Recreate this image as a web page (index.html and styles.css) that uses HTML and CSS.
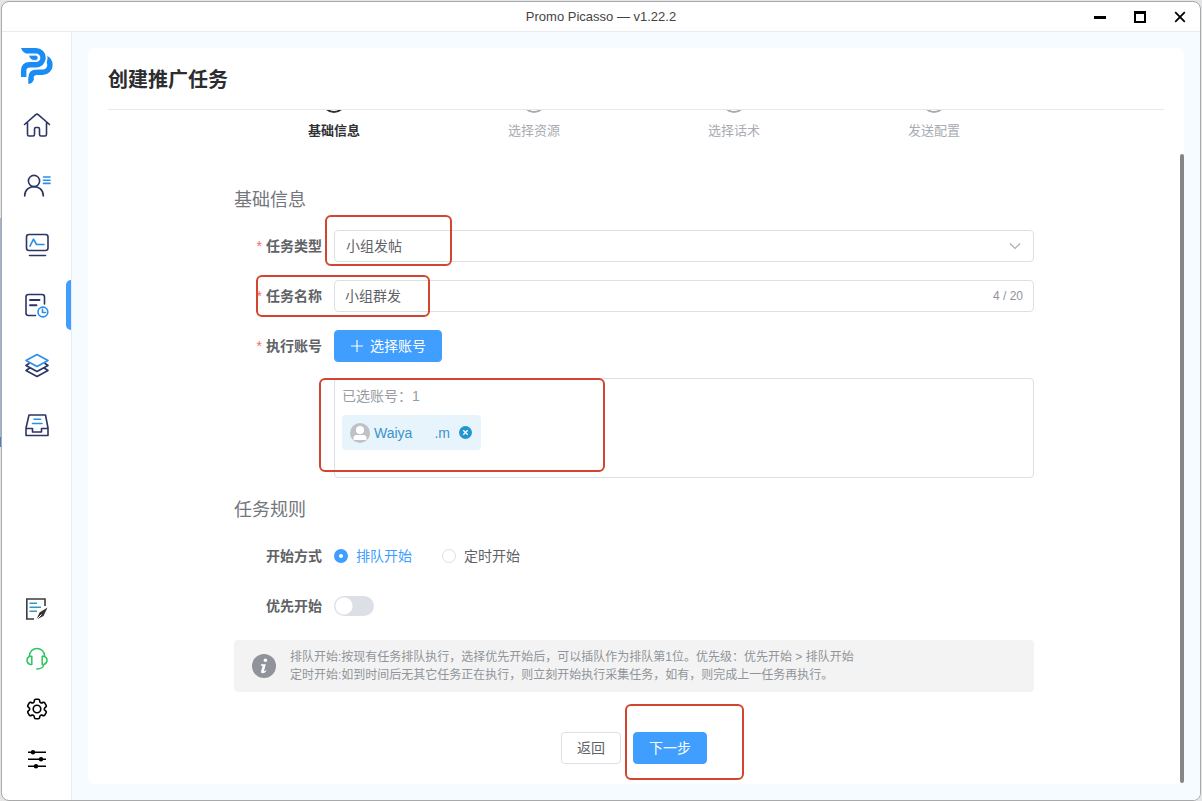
FILE: index.html
```html
<!DOCTYPE html>
<html lang="zh-CN">
<head>
<meta charset="utf-8">
<meta name="viewport" content="width=device-width, initial-scale=1">
<title>Promo Picasso — v1.22.2</title>
<link rel="stylesheet" href="styles.css">
</head>
<body>
<div class="window">
  <header class="titlebar">
    <span class="titlebar-text">Promo Picasso — v1.22.2</span>
    <div class="window-controls">
      <button type="button" aria-label="最小化"><svg width="16" height="16" viewBox="0 0 16 16"><path d="M2 8.500H14" stroke="#000" stroke-width="3"/></svg></button>
      <button type="button" aria-label="最大化"><svg width="16" height="16" viewBox="0 0 16 16"><path d="M3 3.500V13H13V3.500" fill="none" stroke="#000" stroke-width="2"/><path d="M2 3.500H14" stroke="#000" stroke-width="3"/></svg></button>
      <button type="button" aria-label="关闭"><svg width="16" height="16" viewBox="0 0 16 16"><path d="M3.200 3.200L12.800 12.800M12.800 3.200L3.200 12.800" stroke="#000" stroke-width="1.800"/></svg></button>
    </div>
  </header>
  <div class="body">
    <nav class="sidebar">
      <div class="logo">
        <svg width="34" height="38" viewBox="20 47 34 38" fill="none" stroke="#1a8cf5" stroke-width="5.400">
          <path d="M45.500 57.800q4.500 2.400 4.500 7a7.400 7.400 0 0 1-7.400 7.500H37q-6 0-6 5.500V80"/>
          <path d="M28.300 79h5.400q-.5 4.500-5.400 5z" fill="#1a8cf5" stroke="none"/>
          <path d="M26 50.700H36a7 7 0 0 1 0 14.100H30q-6.300 0-6.300 6V77" stroke="#fff" stroke-width="9"/>
          <path d="M26 50.700H36a7 7 0 0 1 0 14.100H30q-6.300 0-6.300 6V77"/>
          <path d="M21 48h6v5.400q-4.500-.4-6-5.400z" fill="#1a8cf5" stroke="none"/>
          <path d="M28.500 55.200H35.500a2.600 2.600 0 0 1 0 5.200H33q-3.500-.8-4.500-5.200z" fill="#1a8cf5" stroke="#fff" stroke-width=".8"/>
        </svg>
      </div>
      <div class="nav-main">
        <button type="button" aria-label="首页"><svg class="icon" viewBox="0 0 32 32"><path d="M3.500 15.500L14.800 5.600q1.200-1 2.400 0L28.500 15.500M6.500 14v11.500q0 1.500 1.500 1.500h4q1.500 0 1.500-1.500V20q0-1.500 1.500-1.500h2q1.500 0 1.500 1.500v5.500q0 1.500 1.500 1.500h4q1.500 0 1.500-1.500V14"/></svg></button>
        <button type="button" aria-label="账号"><svg class="icon" viewBox="0 0 32 32"><circle cx="13" cy="12" r="5.600"/><path d="M3.700 27c0-12.500 18.600-12.500 18.600 0"/><path class="accent" d="M22.500 8h6.500M22.500 11.200h6.500M22.500 14.400h6.500"/></svg></button>
        <button type="button" aria-label="监控"><svg class="icon" viewBox="0 0 32 32"><rect x="5.500" y="5.500" width="21.500" height="16" rx="2.500"/><path d="M8.500 26.500h16"/><path class="accent" d="M9 17.200l3.500-7 3 5.300H23"/></svg></button>
        <button type="button" class="active" aria-label="任务"><svg class="icon" viewBox="0 0 32 32"><path d="M14.500 26.500H7.500q-2.500 0-2.500-2.500V8q0-2.500 2.500-2.500h13.500q2.500 0 2.500 2.500v7"/><path d="M9 11h9.500M9 16.300h6.500" stroke-width="1.900"/><g class="accent"><circle cx="21.900" cy="23" r="4.900"/><path d="M21.500 20.300v3.200h3"/></g></svg></button>
        <button type="button" aria-label="素材"><svg class="icon" viewBox="0 0 32 32"><path d="M8 14.500L5 16.500l11 6 11-6-3-2M8 19.500L5 21.500l11 6 11-6-3-2"/><path class="accent" fill="#fff" d="M16 5.500l11 6-11 6-11-6z"/></svg></button>
        <button type="button" aria-label="收件箱"><svg class="icon" viewBox="0 0 32 32"><path d="M8 6h16.500l2.500 13v7.500H5V19zM5 19.500h6.500V23h9v-3.500H27"/><path class="accent" d="M13 10.200h6.500M11.500 14.500H21"/></svg></button>
      </div>
      <div class="nav-extra">
        <button type="button" aria-label="记录"><svg class="icon note" viewBox="0 0 32 32"><path d="M24 13V6H5.800v20H13"/><path d="M8.500 10.200H16M8.500 14.200H20M8.500 18.200H16" stroke="#3b93c5"/><path d="M15.500 26.500l3-7 8-5-4 8.500z" fill="#333" stroke="none"/><path d="M15.500 26.500l5-5" stroke="#fff" stroke-width="1"/></svg></button>
        <button type="button" aria-label="客服"><svg class="icon support" viewBox="0 0 32 32"><path d="M8.200 13.500C8.700 2.800 23.300 2.800 23.800 13.500M10.800 13.200H9q-3 .8-3 4t3 4.200h1.800zM21.200 13.200H23q3 .8 3 4t-3 4.200h-1.800zM22.800 21.500q-.6 4.500-7 4.500"/></svg></button>
        <button type="button" aria-label="设置"><svg class="icon gear" viewBox="0 0 24 24"><path d="M9.594 3.940c.09-.542.560-.940 1.110-.940h2.593c.550 0 1.020.398 1.110.940l.213 1.281c.063.374.313.686.645.870.074.040.147.083.220.127.325.196.720.257 1.075.124l1.217-.456a1.125 1.125 0 0 1 1.370.490l1.296 2.247a1.125 1.125 0 0 1-.260 1.431l-1.003.827c-.293.241-.438.613-.430.992a7.723 7.723 0 0 1 0 .255c-.008.378.137.750.430.991l1.004.827c.424.350.534.955.260 1.430l-1.298 2.247a1.125 1.125 0 0 1-1.369.491l-1.217-.456c-.355-.133-.750-.072-1.076.124a6.470 6.470 0 0 1-.220.128c-.331.183-.581.495-.644.869l-.213 1.281c-.090.543-.560.940-1.110.940h-2.594c-.550 0-1.019-.398-1.110-.940l-.213-1.281c-.062-.374-.312-.686-.644-.870a6.520 6.520 0 0 1-.220-.127c-.325-.196-.720-.257-1.076-.124l-1.217.456a1.125 1.125 0 0 1-1.369-.490l-1.297-2.247a1.125 1.125 0 0 1 .260-1.431l1.004-.827c.292-.240.437-.613.430-.991a6.932 6.932 0 0 1 0-.255c.007-.380-.138-.751-.430-.992l-1.004-.827a1.125 1.125 0 0 1-.260-1.430l1.297-2.247a1.125 1.125 0 0 1 1.370-.491l1.216.456c.356.133.751.072 1.076-.124.072-.044.146-.086.220-.128.332-.183.582-.495.644-.869z"/><circle cx="12" cy="12" r="3.500"/></svg></button>
        <button type="button" aria-label="偏好"><svg class="icon sliders" viewBox="0 0 32 32"><path d="M7 9.200h18M7 16.200h18M7 23.200h18"/><g fill="#000" stroke="none"><circle cx="12" cy="9.200" r="2.200"/><circle cx="20" cy="16.200" r="2.200"/><circle cx="15" cy="23.200" r="2.200"/></g></svg></button>
      </div>
    </nav>
    <main class="content">
      <section class="card">
        <h1>创建推广任务</h1>
        <div class="scroller">
          <ol class="steps">
            <li class="current"><span class="dot"></span>基础信息</li>
            <li><span class="dot"></span>选择资源</li>
            <li><span class="dot"></span>选择话术</li>
            <li><span class="dot"></span>发送配置</li>
          </ol>
          <form class="form">
            <h2>基础信息</h2>
            <div class="row">
              <label class="label required" for="type">任务类型</label>
              <div class="field">
                <select id="type" class="control"><option>小组发帖</option></select>
                <svg class="chevron" width="12" height="12" viewBox="0 0 12 12"><path d="M1 3.500l5 5 5-5" fill="none" stroke="#a8abb2" stroke-width="1.200"/></svg>
                <span class="mark mark-type"></span>
              </div>
            </div>
            <div class="row">
              <label class="label required" for="name">任务名称</label>
              <div class="field">
                <input id="name" class="control" type="text" value="小组群发" maxlength="20">
                <span class="count">4 / 20</span>
                <span class="mark mark-name"></span>
              </div>
            </div>
            <div class="row">
              <span class="label required">执行账号</span>
              <div class="field">
                <button type="button" class="btn primary"><svg width="14" height="14" viewBox="0 0 14 14"><path d="M7 1v12M1 7h12" stroke="#fff" stroke-width="1.100"/></svg>选择账号</button>
                <div class="accounts">
                  <p>已选账号：1</p>
                  <div class="tag">
                    <svg width="20" height="20" viewBox="0 0 20 20"><circle cx="10" cy="10" r="10" fill="#bfc1c6"/><circle cx="10" cy="7" r="4" fill="#fff"/><path d="M3.500 17v-2q0-3 3-3h7q3 0 3 3v2z" fill="#fff"/></svg>
                    <span class="tag-name"><span>Waiya</span><span>.m</span></span>
                    <button type="button" class="tag-close" aria-label="移除"><svg width="13" height="13" viewBox="0 0 13 13"><circle cx="6.500" cy="6.500" r="6.500" fill="#2196cf"/><path d="M4.300 4.300l4.400 4.400M8.700 4.300L4.300 8.700" stroke="#fff" stroke-width="1.300"/></svg></button>
                  </div>
                  <span class="mark mark-accounts"></span>
                </div>
              </div>
            </div>
            <h2>任务规则</h2>
            <div class="row">
              <span class="label">开始方式</span>
              <div class="field radios">
                <label><input type="radio" name="start" checked><span>排队开始</span></label>
                <label><input type="radio" name="start"><span>定时开始</span></label>
              </div>
            </div>
            <div class="row">
              <label class="label" for="priority">优先开始</label>
              <div class="field radios"><input id="priority" class="switch" type="checkbox" role="switch"></div>
            </div>
            <div class="notice">
              <svg width="24" height="24" viewBox="0 0 24 24"><circle cx="12" cy="12" r="12" fill="#909399"/><circle cx="13.400" cy="6.300" r="1.700" fill="#fff"/><path d="M9 10.300h4.800l-1.900 7q.8.300 2-1l.6.500q-1.700 2.500-3.700 2.500-2.200 0-1.600-2.200l1.400-5-1.800-.6z" fill="#fff"/></svg>
              <p>排队开始:按现有任务排队执行，选择优先开始后，可以插队作为排队第1位。优先级：优先开始 &gt; 排队开始<br>定时开始:如到时间后无其它任务正在执行，则立刻开始执行采集任务，如有，则完成上一任务再执行。</p>
            </div>
            <div class="actions">
              <button type="button" class="btn">返回</button>
              <div class="next"><button type="button" class="btn primary">下一步</button><span class="mark mark-next"></span></div>
            </div>
          </form>
        </div>
        <span class="scrollbar"></span>
      </section>
    </main>
  </div>
</div>
</body>
</html>
```
FILE: styles.css
```css
* { box-sizing: border-box; }
body {
  margin: 0;
  padding: 1px 1px 0;
  height: 100vh;
  overflow: hidden;
  background: linear-gradient(#e4e5e7 218px, #9fb4d0 218px, #9fb4d0 437px, #4a7fd0 437px, #4a7fd0 447px, #e4e5e7 447px) left / 2px 100% no-repeat #e4e5e7;
  font: 14px/20px "Liberation Sans", "Noto Sans CJK SC", sans-serif;
  color: #606266;
}
h1, h2, p, ol { margin: 0; padding: 0; }
button { font: inherit; color: inherit; background: none; border: 0; padding: 0; }
svg { display: block; flex: none; }

.window {
  display: flex;
  flex-direction: column;
  height: 100%;
  border: 1px solid #a9a9a9;
  border-radius: 8px;
  background: #fff;
  overflow: hidden;
}
.titlebar {
  position: relative;
  display: flex;
  align-items: center;
  justify-content: center;
  height: 30px;
  flex: none;
  border-bottom: 1px solid #e9ebee;
  font-size: 13px;
  color: #444;
}
.window-controls { position: absolute; right: 0; top: 0; display: flex; }
.window-controls button { display: grid; place-items: center; width: 40px; height: 30px; }

.body { flex: 1; display: flex; min-height: 0; }
.sidebar {
  display: flex;
  flex-direction: column;
  width: 70px;
  flex: none;
  padding: 15px 0 16px 1px;
  border-right: 1px solid #e8edf2;
}
.logo { display: flex; justify-content: center; height: 48px; }
.nav-main, .nav-extra { display: flex; flex-direction: column; }
.nav-main button, .nav-extra button { position: relative; display: grid; place-items: center; height: 60px; }
.nav-extra { margin-top: auto; }
.nav-extra button { height: 50px; }
.active::after {
  content: "";
  position: absolute;
  right: 0;
  top: 5px;
  width: 5px;
  height: 50px;
  border-radius: 5px 0 0 5px;
  background: #409eff;
}
.icon { width: 32px; height: 32px; fill: none; stroke: #2c3566; stroke-width: 1.6; stroke-linejoin: round; stroke-linecap: round; }
.accent { stroke: #2b8eea; }
.note { stroke: #3c3c3c; stroke-linecap: butt; stroke-linejoin: miter; }
.support { stroke: #2fc45f; stroke-width: 1.5; }
.gear { width: 26px; height: 26px; stroke: #000; stroke-width: 1.5; }
.sliders { stroke: #000; stroke-linecap: butt; }

.content { flex: 1; display: flex; min-width: 0; padding: 16px; background: #f6fbff; }
.card {
  position: relative;
  flex: 1;
  display: flex;
  flex-direction: column;
  min-width: 0;
  background: #fff;
  border-radius: 6px;
}
h1 {
  margin: 0 20px;
  padding: 17px 0 14px;
  border-bottom: 1px solid #e8e9eb;
  font-size: 20px;
  line-height: 30px;
  color: #2c2d30;
}
.scroller { flex: 1; min-height: 0; overflow: hidden; padding: 0 24px 0 20px; }
.scrollbar { position: absolute; right: 0; top: 106px; bottom: 1px; width: 4px; border-radius: 2px; background: #868686; }

.steps {
  display: flex;
  max-width: 800px;
  margin: -21px auto 45px;
  list-style: none;
  font-size: 13px;
  color: #a8abb2;
}
.steps li { flex: 1; display: flex; flex-direction: column; align-items: center; gap: 8px; }
.steps .current { color: #303133; font-weight: bold; }
.dot { width: 24px; height: 24px; border: 2px solid; border-radius: 50%; }

.form { display: flex; flex-direction: column; gap: 18px; max-width: 800px; margin: 0 auto; }
h2 { padding-top: 2px; font-size: 18px; line-height: 24px; font-weight: normal; color: #73767c; }
.row { display: flex; }
.label { width: 100px; flex: none; padding-right: 12px; line-height: 32px; font-weight: bold; text-align: right; }
.required::before { content: "*"; margin-right: 4px; font-weight: normal; color: #f56c6c; }
.field { position: relative; flex: 1; min-width: 0; }
.control {
  display: block;
  width: 100%;
  height: 32px;
  padding: 0 11px;
  border: 1px solid #dcdfe6;
  border-radius: 4px;
  background: #fff;
  font: inherit;
  color: #606266;
  appearance: none;
}
input.control { padding: 0 10px 2px; }
.chevron { position: absolute; right: 13px; top: 10px; }
.count { position: absolute; right: 11px; top: 6px; font-size: 12px; color: #909399; }
.btn {
  display: inline-flex;
  align-items: center;
  justify-content: center;
  gap: 6px;
  height: 32px;
  padding: 0 15px;
  border: 1px solid #dcdfe6;
  border-radius: 4px;
}
.primary { border-color: #409eff; background: #409eff; color: #fff; }
.accounts {
  position: relative;
  height: 100px;
  margin-top: 16px;
  padding: 7px;
  border: 1px solid #dcdfe6;
  border-radius: 4px;
  color: #9a9ca2;
}
.tag {
  display: inline-flex;
  align-items: center;
  height: 35px;
  margin-top: 9px;
  padding: 0 9px 0 8px;
  border-radius: 4px;
  background: #e8f4fc;
  color: #3a93cc;
}
.tag-name { display: flex; justify-content: space-between; width: 76px; margin: 0 9px 0 4px; }

.radios { display: flex; align-items: center; gap: 30px; height: 32px; }
.radios label { display: flex; align-items: center; gap: 8px; }
.radios input { appearance: none; margin: 0; }
.radios [type="radio"] { width: 14px; height: 14px; border: 1px solid #dcdfe6; border-radius: 50%; background: #fff; }
.radios [type="radio"]:checked { border: 5px solid #409eff; }
.radios :checked + span { color: #409eff; }
.radios .switch { width: 40px; height: 20px; border-radius: 10px; background: radial-gradient(circle at 10px 10px, #fff 8px, #dcdfe6 9px); }

.notice {
  display: flex;
  align-items: center;
  gap: 14px;
  padding: 8px 18px;
  border-radius: 4px;
  background: #f3f3f3;
  font-size: 12px;
  line-height: 18px;
  color: #909399;
}
.actions { display: flex; justify-content: center; gap: 12px; margin-top: 22px; }
.next { position: relative; }

.mark { position: absolute; border: 2px solid #d2462f; border-radius: 6px; pointer-events: none; }
.mark-type { left: -9px; top: -15px; width: 127px; height: 51px; }
.mark-name { left: -78px; top: -5px; width: 174px; height: 42px; }
.mark-accounts { left: -16px; top: -1px; width: 286px; height: 94px; }
.mark-next { left: -8px; top: -28px; width: 119px; height: 76px; }
```
